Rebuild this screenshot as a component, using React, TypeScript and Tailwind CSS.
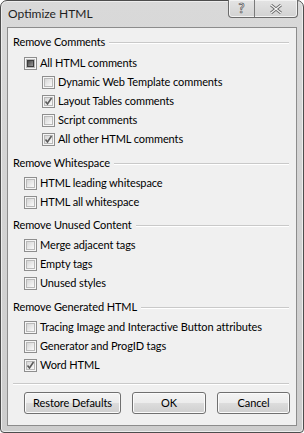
import React from "react"

type Row = { label: string; state: "on" | "off" | "mixed"; indent?: boolean }

const sections: { title: string; rows: Row[] }[] = [
  {
    title: "Remove Comments",
    rows: [
      { label: "All HTML comments", state: "mixed" },
      { label: "Dynamic Web Template comments", state: "off", indent: true },
      { label: "Layout Tables comments", state: "on", indent: true },
      { label: "Script comments", state: "off", indent: true },
      { label: "All other HTML comments", state: "on", indent: true },
    ],
  },
  {
    title: "Remove Whitespace",
    rows: [
      { label: "HTML leading whitespace", state: "off" },
      { label: "HTML all whitespace", state: "off" },
    ],
  },
  {
    title: "Remove Unused Content",
    rows: [
      { label: "Merge adjacent tags", state: "off" },
      { label: "Empty tags", state: "off" },
      { label: "Unused styles", state: "off" },
    ],
  },
  {
    title: "Remove Generated HTML",
    rows: [
      { label: "Tracing Image and Interactive Button attributes", state: "off" },
      { label: "Generator and ProgID tags", state: "off" },
      { label: "Word HTML", state: "on" },
    ],
  },
]

const Check = ({ state }: { state: Row["state"] }) => (
  <span className="relative w-[13px] h-[13px] shrink-0 border border-[#8e8e8e] bg-[#f6f6f6]">
    <span className="absolute inset-[1px] border border-[#b9b9b9] bg-gradient-to-br from-[#d6d6d6] to-[#fafafa]" />
    {state === "mixed" && (
      <span className="absolute inset-[2px] border border-[#3c3c3c] bg-gradient-to-br from-[#4a4a4a] to-[#9a9a9a]" />
    )}
    {state === "on" && (
      <svg className="absolute left-[1px] top-[1px]" width="9" height="9" viewBox="0 0 9 9">
        <path d="M1.5 4.5 L3.5 7 L7.5 1" fill="none" stroke="#5a5a5a" strokeWidth="1.6" />
      </svg>
    )}
  </span>
)

const Button = ({ children, w }: { children: React.ReactNode; w: string }) => (
  <button
    className={`${w} h-[22px] rounded-[3px] border border-[#707070] bg-[linear-gradient(#f4f4f4_0%,#ececec_48%,#dcdcdc_52%,#cfcfcf_100%)] shadow-[inset_0_0_0_1px_#fbfbfb] text-[11px] tracking-[-0.1px] text-black`}
  >
    {children}
  </button>
)

export default function App() {
  return (
    <div
      className="relative w-[304px] h-[433px] flex flex-col rounded-t-[7px] rounded-b-[4px] border border-[#4d4d4d] bg-[linear-gradient(#d9d9d9,#cdcdcd)] shadow-[inset_0_0_0_1px_#ededed] text-black whitespace-nowrap"
      style={{ fontFamily: 'Lato, "Noto Sans", sans-serif' }}
    >
      {/* title bar */}
      <div className="h-[26px] flex items-center pl-[7px] text-[12px] text-[#1e1e1e]">Optimize HTML</div>
      <div className="absolute top-[-1px] right-[5px] flex h-[18px] rounded-b-[4px] border border-t-0 border-[#6b6b6b] bg-[linear-gradient(#e4e4e4,#d2d2d2)] shadow-[inset_0_0_0_1px_#f2f2f2] overflow-hidden">
        <div className="w-[26px] flex items-center justify-center border-r border-[#7a7a7a]">
          <span className="text-[13px] font-bold leading-none text-white [-webkit-text-stroke:0.7px_#555]">?</span>
        </div>
        <div className="w-[42px] flex items-center justify-center">
          <svg width="12" height="10" viewBox="0 0 12 10">
            <path d="M1 1 L11 9 M11 1 L1 9" stroke="#6a6a6a" strokeWidth="3" />
            <path d="M1 1 L11 9 M11 1 L1 9" stroke="#f4f4f4" strokeWidth="1.2" />
          </svg>
        </div>
      </div>

      {/* client area */}
      <div className="mx-[6px] mb-[6px] flex-1 flex flex-col border border-[#8c8c8c] bg-[#f0f0f0] pt-[5px] px-[5px] text-[11px] tracking-[-0.1px]">
        {sections.map((s, i) => (
          <div key={s.title} className={i === 0 ? "" : i === 2 ? "mt-[4px]" : "mt-[5px]"}>
            <div className="h-[19px] flex items-center gap-[4px]">
              <span>{s.title}</span>
              <span className="flex-1 mr-[2px] border-t border-[#c9c9c9] border-b border-b-white" />
            </div>
            <div className={i === 0 ? "mt-[2px]" : "mt-[1px]"}>
              {s.rows.map((r) => (
                <div
                  key={r.label}
                  className={`h-[19px] flex items-center gap-[3px] ${r.indent ? "pl-[29px]" : "pl-[11px]"}`}
                >
                  <Check state={r.state} />
                  <span>{r.label}</span>
                </div>
              ))}
            </div>
          </div>
        ))}
        <div className="mt-[8px] mr-[2px] border-t border-[#c9c9c9] border-b border-b-white" />
        <div className="mt-[7px] flex pl-[11px] gap-[11px]">
          <Button w="w-[97px]">Restore Defaults</Button>
          <Button w="w-[74px]">OK</Button>
          <Button w="w-[73px]">Cancel</Button>
        </div>
      </div>
    </div>
  )
}
